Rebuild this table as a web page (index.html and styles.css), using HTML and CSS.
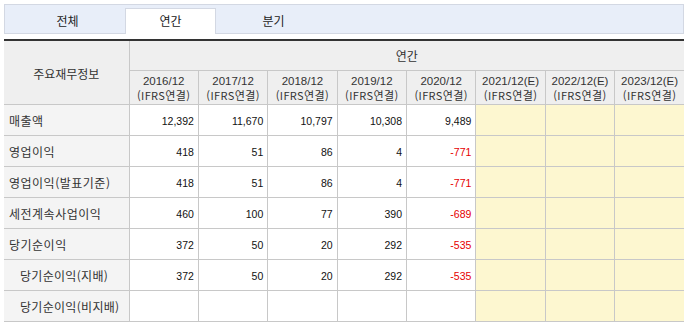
FILE: index.html
```html
<!DOCTYPE html>
<html lang="ko">
  <head>
    <meta charset="utf-8" />
    <title>주요재무정보</title>
    <link rel="stylesheet" href="styles.css">
  </head>
  <body>
    <div class="wrap">
      <div class="tabs">
        <div class="tab">전체</div>
        <div class="tab active">연간</div>
        <div class="tab">분기</div>
      </div>
      <table class="fin-table">
        <colgroup>
          <col class="col-label">
          <col span="8">
        </colgroup>
        <thead>
          <tr class="head-1">
            <th rowspan="2" class="head-label">주요재무정보</th>
            <th colspan="8">연간</th>
          </tr>
          <tr class="head-2">
            <th>2016/12<br><span>(IFRS연결)</span></th>
            <th>2017/12<br><span>(IFRS연결)</span></th>
            <th>2018/12<br><span>(IFRS연결)</span></th>
            <th>2019/12<br><span>(IFRS연결)</span></th>
            <th>2020/12<br><span>(IFRS연결)</span></th>
            <th>2021/12(E)<br><span>(IFRS연결)</span></th>
            <th>2022/12(E)<br><span>(IFRS연결)</span></th>
            <th>2023/12(E)<br><span>(IFRS연결)</span></th>
          </tr>
        </thead>
        <tbody>
          <tr>
            <th>매출액</th>
            <td>12,392</td><td>11,670</td><td>10,797</td><td>10,308</td><td>9,489</td>
            <td class="est"></td><td class="est"></td><td class="est"></td>
          </tr>
          <tr>
            <th>영업이익</th>
            <td>418</td><td>51</td><td>86</td><td>4</td><td class="neg">-771</td>
            <td class="est"></td><td class="est"></td><td class="est"></td>
          </tr>
          <tr>
            <th>영업이익(발표기준)</th>
            <td>418</td><td>51</td><td>86</td><td>4</td><td class="neg">-771</td>
            <td class="est"></td><td class="est"></td><td class="est"></td>
          </tr>
          <tr>
            <th>세전계속사업이익</th>
            <td>460</td><td>100</td><td>77</td><td>390</td><td class="neg">-689</td>
            <td class="est"></td><td class="est"></td><td class="est"></td>
          </tr>
          <tr>
            <th>당기순이익</th>
            <td>372</td><td>50</td><td>20</td><td>292</td><td class="neg">-535</td>
            <td class="est"></td><td class="est"></td><td class="est"></td>
          </tr>
          <tr>
            <th class="sub">당기순이익(지배)</th>
            <td>372</td><td>50</td><td>20</td><td>292</td><td class="neg">-535</td>
            <td class="est"></td><td class="est"></td><td class="est"></td>
          </tr>
          <tr>
            <th class="sub">당기순이익(비지배)</th>
            <td></td><td></td><td></td><td></td><td></td>
            <td class="est"></td><td class="est"></td><td class="est"></td>
          </tr>
        </tbody>
      </table>
    </div>
  </body>
</html>
```

FILE: styles.css
```css
body {
  margin: 0;
  background-color: white;
  font-family: "Noto Sans CJK KR", "Liberation Sans", sans-serif;
  color: #333;
}
.wrap {
  padding: 4px 0 0 4px;
  width: 680px;
}
.tabs {
  display: flex;
  align-items: flex-end;
  gap: 12px;
  height: 28px;
  padding-left: 17px;
  background-color: #e8eef9;
  border: 1px solid #d3d8e3;
}
.tab {
  width: 89px;
  height: 24px;
  line-height: 24px;
  text-align: center;
  font-size: 12px;
  color: #222;
  border: 1px solid transparent;
  border-bottom: 0;
}
.tab.active {
  background-color: white;
  border-color: #d3d8e3;
  height: 25px;
  margin-bottom: -1px;
}
.fin-table {
  margin-top: 5px;
  width: 680px;
  table-layout: fixed;
  border-collapse: collapse;
  border-top: 2px solid #333;
  font-size: 12px;
}
.col-label {
  width: 125px;
}
.fin-table th,
.fin-table td {
  border: 1px solid #c8c8c8;
  padding: 0;
  font-weight: normal;
}
.fin-table tr > :first-child {
  border-left: 0;
}
.fin-table tr > :last-child {
  border-right: 0;
}
.fin-table thead th {
  background-color: #efefef;
  text-align: center;
  color: #333;
}
.head-1 th {
  height: 29px;
  border-top: 0;
}
.head-1 .head-label {
  padding-top: 2px;
}
.head-2 th {
  height: 32px;
  line-height: 14px;
  font-size: 11.5px;
  font-family: "Liberation Sans", "Noto Sans CJK KR", sans-serif;
  color: #444;
  padding-top: 1px;
}
.head-2 span {
  font-family: "Noto Sans CJK KR", sans-serif;
  font-size: 11px;
  letter-spacing: 0.4px;
}
.fin-table tbody th {
  background-color: #f4f4f4;
  text-align: left;
  padding-left: 5px;
  height: 30px;
  color: #333;
  letter-spacing: 0.5px;
}
.fin-table tbody th.sub {
  padding-left: 16px;
  letter-spacing: 0.3px;
}
.fin-table tbody td {
  text-align: right;
  padding: 2px 4px 0 0;
  font-family: "Liberation Sans", sans-serif;
  font-size: 10.5px;
  color: #111;
}
.fin-table tbody td.neg {
  color: #e60000;
}
.fin-table tbody td.est {
  background-color: #fdf7d0;
}
```
